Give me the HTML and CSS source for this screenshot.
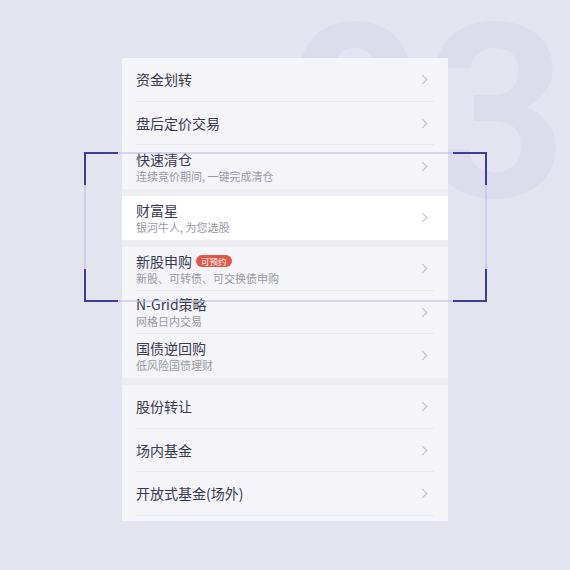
FILE: index.html
```html
<!DOCTYPE html>
<html lang="zh">
<head>
<meta charset="utf-8">
<link rel="stylesheet" href="styles.css">
</head>
<body>
<div class="stage">
  <div class="bignum">03</div>
  <div class="panel">
    <div class="row"><div class="text"><div class="title">资金划转</div></div><span class="chev"></span></div>
    <div class="row"><div class="text"><div class="title">盘后定价交易</div></div><span class="chev"></span></div>
    <div class="row last"><div class="text"><div class="title">快速清仓</div><div class="sub">连续竞价期间, 一键完成清仓</div></div><span class="chev"></span></div>
    <div class="band"></div>
    <div class="row last white"><div class="text"><div class="title">财富星</div><div class="sub">银河牛人, 为您选股</div></div><span class="chev"></span></div>
    <div class="band"></div>
    <div class="row"><div class="text"><div class="title">新股申购<span class="badge">可预约</span></div><div class="sub">新股、可转债、可交换债申购</div></div><span class="chev"></span></div>
    <div class="row"><div class="text"><div class="title">N-Grid策略</div><div class="sub">网格日内交易</div></div><span class="chev"></span></div>
    <div class="row last"><div class="text"><div class="title">国债逆回购</div><div class="sub">低风险国债理财</div></div><span class="chev"></span></div>
    <div class="band"></div>
    <div class="row"><div class="text"><div class="title">股份转让</div></div><span class="chev"></span></div>
    <div class="row"><div class="text"><div class="title">场内基金</div></div><span class="chev"></span></div>
    <div class="row"><div class="text"><div class="title">开放式基金(场外)</div></div><span class="chev"></span></div>
    <div class="foot"></div>
  </div>
  <div class="frame">
    <span class="c tl"></span><span class="c tr"></span><span class="c bl"></span><span class="c br"></span>
  </div>
</div>
</body>
</html>
```
FILE: styles.css
```css
html, body {
  margin: 0;
  padding: 0;
  background: #e4e4f0;
}
.stage {
  position: relative;
  width: 570px;
  height: 570px;
  overflow: hidden;
  font-family: "Noto Sans CJK SC", "Noto Sans", sans-serif;
  padding-top: 58px;
  box-sizing: border-box;
}
.bignum {
  position: absolute;
  left: 285px;
  top: -8px;
  font-family: Roboto, "Noto Sans", sans-serif;
  font-weight: 700;
  font-size: 244px;
  line-height: 1;
  color: #dcdcec;
  letter-spacing: 2px;
}
.panel {
  position: relative;
  margin-left: 122px;
  width: 326px;
  background: #f4f4f9;
}
.row {
  height: 43.5px;
  display: flex;
  align-items: center;
  padding: 0 20px 0 14px;
  position: relative;
}
.row::after {
  content: "";
  position: absolute;
  left: 14px;
  right: 14px;
  bottom: 0;
  height: 1px;
  background: #e9e9f0;
}
.row.last::after { display: none; }
.row.white { background: #ffffff; }
.text { flex: 1; }
.title {
  font-size: 14px;
  line-height: 19px;
  color: #383a4e;
  display: flex;
  align-items: center;
}
.sub {
  font-size: 11px;
  line-height: 15px;
  color: #9a9aa4;
}
.badge {
  margin-left: 4px;
  background: #e0574a;
  color: #fff;
  font-size: 8.5px;
  line-height: 12px;
  height: 12px;
  padding: 0 5px;
  border-radius: 6px;
}
.chev {
  width: 6px;
  height: 6px;
  border-top: 1.6px solid #c0c0c8;
  border-right: 1.6px solid #c0c0c8;
  transform: rotate(45deg);
  margin-right: 2px;
}
.band {
  height: 7.5px;
  background: #eeeef2;
}
.foot { height: 5px; }
.frame {
  position: absolute;
  left: 84px;
  top: 152px;
  width: 403px;
  height: 150px;
  box-sizing: border-box;
  border: 2px solid rgba(190, 190, 228, 0.6);
}
.c {
  position: absolute;
  width: 32px;
  height: 31px;
  border-color: #3d3d9c;
  border-style: solid;
  border-width: 0;
}
.tl { left: -2px; top: -2px; border-top-width: 2px; border-left-width: 2px; }
.tr { right: -2px; top: -2px; border-top-width: 2px; border-right-width: 2px; }
.bl { left: -2px; bottom: -2px; border-bottom-width: 2px; border-left-width: 2px; }
.br { right: -2px; bottom: -2px; border-bottom-width: 2px; border-right-width: 2px; }
```
